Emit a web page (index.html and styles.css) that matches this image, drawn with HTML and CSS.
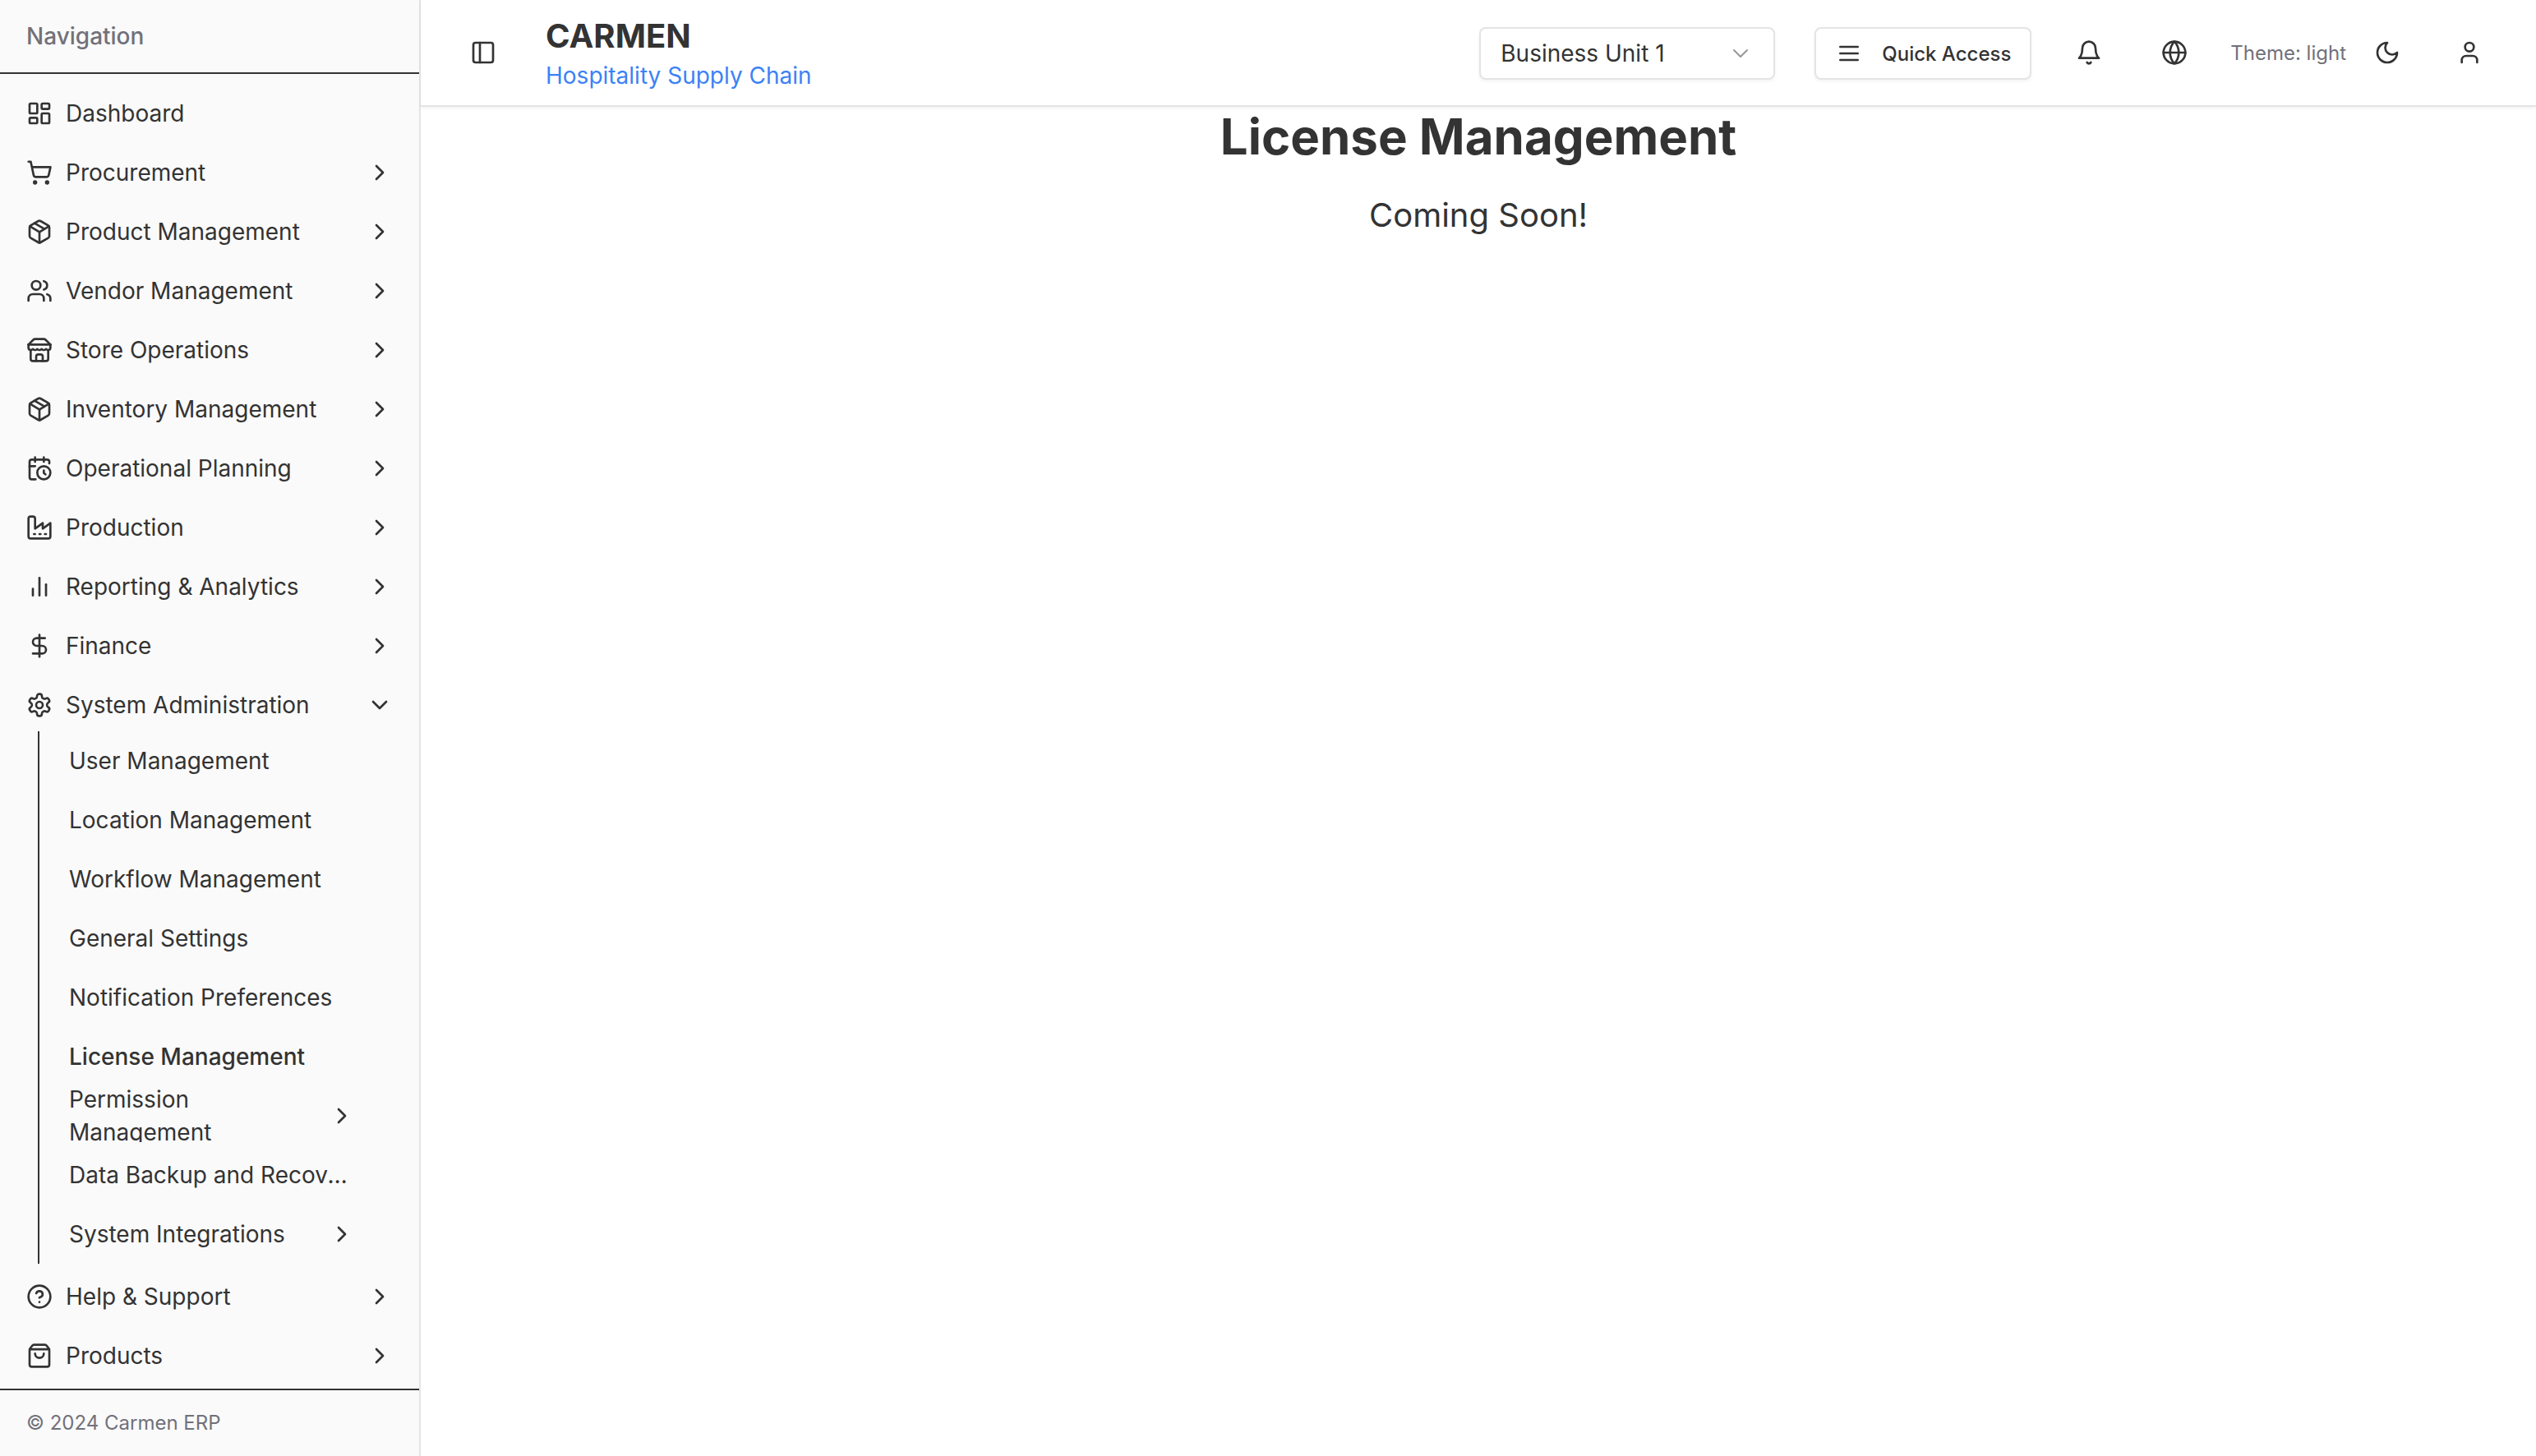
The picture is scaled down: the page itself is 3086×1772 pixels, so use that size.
FILE: index.html
```html
<!DOCTYPE html>
<html lang="en">
<head>
<meta charset="utf-8">
<title>CARMEN - License Management</title>
<link rel="stylesheet" href="styles.css">
</head>
<body>
<svg class="defs" aria-hidden="true">
  <defs>
    <symbol id="i-dashboard" viewBox="0 0 24 24"><rect x="3" y="3" width="7" height="9" rx="1"/><rect x="14" y="3" width="7" height="5" rx="1"/><rect x="14" y="12" width="7" height="9" rx="1"/><rect x="3" y="16" width="7" height="5" rx="1"/></symbol>
    <symbol id="i-cart" viewBox="0 0 24 24"><circle cx="8" cy="21" r="1"/><circle cx="19" cy="21" r="1"/><path d="M2.05 2.05h2l2.66 12.42a2 2 0 0 0 2 1.58h9.78a2 2 0 0 0 1.95-1.57l1.65-7.43H5.12"/></symbol>
    <symbol id="i-package" viewBox="0 0 24 24"><path d="M11 21.73a2 2 0 0 0 2 0l7-4A2 2 0 0 0 21 16V8a2 2 0 0 0-1-1.73l-7-4a2 2 0 0 0-2 0l-7 4A2 2 0 0 0 3 8v8a2 2 0 0 0 1 1.73z"/><path d="M12 22V12"/><path d="m3.3 7 7.703 4.734a2 2 0 0 0 1.994 0L20.7 7"/><path d="m7.5 4.27 9 5.15"/></symbol>
    <symbol id="i-users" viewBox="0 0 24 24"><path d="M16 21v-2a4 4 0 0 0-4-4H6a4 4 0 0 0-4 4v2"/><circle cx="9" cy="7" r="4"/><path d="M22 21v-2a4 4 0 0 0-3-3.87"/><path d="M16 3.13a4 4 0 0 1 0 7.75"/></symbol>
    <symbol id="i-store" viewBox="0 0 24 24"><path d="m2 7 4.41-4.41A2 2 0 0 1 7.83 2h8.34a2 2 0 0 1 1.42.59L22 7"/><path d="M4 12v8a2 2 0 0 0 2 2h12a2 2 0 0 0 2-2v-8"/><path d="M15 22v-4a2 2 0 0 0-2-2h-2a2 2 0 0 0-2 2v4"/><path d="M2 7h20"/><path d="M22 7v3a2 2 0 0 1-2 2a2.7 2.7 0 0 1-1.59-.63.7.7 0 0 0-.82 0A2.7 2.7 0 0 1 16 12a2.7 2.7 0 0 1-1.59-.63.7.7 0 0 0-.82 0A2.7 2.7 0 0 1 12 12a2.7 2.7 0 0 1-1.59-.63.7.7 0 0 0-.82 0A2.7 2.7 0 0 1 8 12a2.7 2.7 0 0 1-1.59-.63.7.7 0 0 0-.82 0A2.7 2.7 0 0 1 4 12a2 2 0 0 1-2-2V7"/></symbol>
    <symbol id="i-calendar" viewBox="0 0 24 24"><path d="M21 7.5V6a2 2 0 0 0-2-2H5a2 2 0 0 0-2 2v14a2 2 0 0 0 2 2h3.5"/><path d="M16 2v4"/><path d="M8 2v4"/><path d="M3 10h5"/><path d="M17.5 17.5 16 16.3V14"/><circle cx="16" cy="16" r="6"/></symbol>
    <symbol id="i-factory" viewBox="0 0 24 24"><path d="M2 20a2 2 0 0 0 2 2h16a2 2 0 0 0 2-2V8l-7 5V8l-7 5V4a2 2 0 0 0-2-2H4a2 2 0 0 0-2 2Z"/><path d="M17 18h1"/><path d="M12 18h1"/><path d="M7 18h1"/></symbol>
    <symbol id="i-chart" viewBox="0 0 24 24"><path d="M18 20V10"/><path d="M12 20V4"/><path d="M6 20v-6"/></symbol>
    <symbol id="i-dollar" viewBox="0 0 24 24"><path d="M12 2v20"/><path d="M17 5H9.5a3.5 3.5 0 0 0 0 7h5a3.5 3.5 0 0 1 0 7H6"/></symbol>
    <symbol id="i-gear" viewBox="0 0 24 24"><path d="M12.22 2h-.44a2 2 0 0 0-2 2v.18a2 2 0 0 1-1 1.73l-.43.25a2 2 0 0 1-2 0l-.15-.08a2 2 0 0 0-2.73.73l-.22.38a2 2 0 0 0 .73 2.73l.15.1a2 2 0 0 1 1 1.72v.51a2 2 0 0 1-1 1.74l-.15.09a2 2 0 0 0-.73 2.73l.22.38a2 2 0 0 0 2.73.73l.15-.08a2 2 0 0 1 2 0l.43.25a2 2 0 0 1 1 1.73V20a2 2 0 0 0 2 2h.44a2 2 0 0 0 2-2v-.18a2 2 0 0 1 1-1.73l.43-.25a2 2 0 0 1 2 0l.15.08a2 2 0 0 0 2.73-.73l.22-.39a2 2 0 0 0-.73-2.73l-.15-.08a2 2 0 0 1-1-1.74v-.5a2 2 0 0 1 1-1.74l.15-.09a2 2 0 0 0 .73-2.73l-.22-.38a2 2 0 0 0-2.73-.73l-.15.08a2 2 0 0 1-2 0l-.43-.25a2 2 0 0 1-1-1.73V4a2 2 0 0 0-2-2z"/><circle cx="12" cy="12" r="3"/></symbol>
    <symbol id="i-help" viewBox="0 0 24 24"><circle cx="12" cy="12" r="10"/><path d="M9.09 9a3 3 0 0 1 5.83 1c0 2-3 3-3 3"/><path d="M12 17h.01"/></symbol>
    <symbol id="i-bag" viewBox="0 0 24 24"><path d="M16 10a4 4 0 0 1-8 0"/><path d="M3.103 6.034h17.794"/><path d="M3.4 5.467a2 2 0 0 0-.4 1.2V20a2 2 0 0 0 2 2h14a2 2 0 0 0 2-2V6.667a2 2 0 0 0-.4-1.2l-2-2.667A2 2 0 0 0 17 2H7a2 2 0 0 0-1.6.8z"/></symbol>
    <symbol id="i-right" viewBox="0 0 24 24"><path d="m9 18 6-6-6-6"/></symbol>
    <symbol id="i-down" viewBox="0 0 24 24"><path d="m6 9 6 6 6-6"/></symbol>
    <symbol id="i-panel" viewBox="0 0 24 24"><rect x="3" y="3" width="18" height="18" rx="2"/><path d="M9 3v18"/></symbol>
    <symbol id="i-menu" viewBox="0 0 24 24"><path d="M4 12h16"/><path d="M4 18h16"/><path d="M4 6h16"/></symbol>
    <symbol id="i-bell" viewBox="0 0 24 24"><path d="M6 8a6 6 0 0 1 12 0c0 7 3 9 3 9H3s3-2 3-9"/><path d="M10.3 21a1.94 1.94 0 0 0 3.4 0"/></symbol>
    <symbol id="i-globe" viewBox="0 0 24 24"><circle cx="12" cy="12" r="10"/><path d="M12 2a14.5 14.5 0 0 0 0 20 14.5 14.5 0 0 0 0-20"/><path d="M2 12h20"/></symbol>
    <symbol id="i-moon" viewBox="0 0 24 24"><path d="M12 3a6 6 0 0 0 9 9 9 9 0 1 1-9-9Z"/></symbol>
    <symbol id="i-user" viewBox="0 0 24 24"><path d="M19 21v-2a4 4 0 0 0-4-4H9a4 4 0 0 0-4 4v2"/><circle cx="12" cy="7" r="4"/></symbol>
  </defs>
</svg>

<div class="app">
  <aside class="sidebar">
    <div class="side-head">Navigation</div>
    <nav class="side-nav">
      <a class="item"><svg class="ico"><use href="#i-dashboard"/></svg><span class="label">Dashboard</span></a>
      <a class="item"><svg class="ico"><use href="#i-cart"/></svg><span class="label">Procurement</span><svg class="ico chev"><use href="#i-right"/></svg></a>
      <a class="item"><svg class="ico"><use href="#i-package"/></svg><span class="label">Product Management</span><svg class="ico chev"><use href="#i-right"/></svg></a>
      <a class="item"><svg class="ico"><use href="#i-users"/></svg><span class="label">Vendor Management</span><svg class="ico chev"><use href="#i-right"/></svg></a>
      <a class="item"><svg class="ico"><use href="#i-store"/></svg><span class="label">Store Operations</span><svg class="ico chev"><use href="#i-right"/></svg></a>
      <a class="item"><svg class="ico"><use href="#i-package"/></svg><span class="label">Inventory Management</span><svg class="ico chev"><use href="#i-right"/></svg></a>
      <a class="item"><svg class="ico"><use href="#i-calendar"/></svg><span class="label">Operational Planning</span><svg class="ico chev"><use href="#i-right"/></svg></a>
      <a class="item"><svg class="ico"><use href="#i-factory"/></svg><span class="label">Production</span><svg class="ico chev"><use href="#i-right"/></svg></a>
      <a class="item"><svg class="ico"><use href="#i-chart"/></svg><span class="label">Reporting &amp; Analytics</span><svg class="ico chev"><use href="#i-right"/></svg></a>
      <a class="item"><svg class="ico"><use href="#i-dollar"/></svg><span class="label">Finance</span><svg class="ico chev"><use href="#i-right"/></svg></a>
      <div class="group">
        <a class="item"><svg class="ico"><use href="#i-gear"/></svg><span class="label">System Administration</span><svg class="ico chev"><use href="#i-down"/></svg></a>
        <div class="sub">
          <a class="sub-item"><span class="label">User Management</span></a>
          <a class="sub-item"><span class="label">Location Management</span></a>
          <a class="sub-item"><span class="label">Workflow Management</span></a>
          <a class="sub-item"><span class="label">General Settings</span></a>
          <a class="sub-item"><span class="label">Notification Preferences</span></a>
          <a class="sub-item active"><span class="label">License Management</span></a>
          <a class="sub-item"><span class="label wrap">Permission Management</span><svg class="ico chev"><use href="#i-right"/></svg></a>
          <a class="sub-item"><span class="label">Data Backup and Recovery</span></a>
          <a class="sub-item"><span class="label">System Integrations</span><svg class="ico chev"><use href="#i-right"/></svg></a>
        </div>
      </div>
      <a class="item"><svg class="ico"><use href="#i-help"/></svg><span class="label">Help &amp; Support</span><svg class="ico chev"><use href="#i-right"/></svg></a>
      <a class="item"><svg class="ico"><use href="#i-bag"/></svg><span class="label">Products</span><svg class="ico chev"><use href="#i-right"/></svg></a>
    </nav>
    <div class="side-foot">© 2024 Carmen ERP</div>
  </aside>

  <div class="page">
    <header class="topbar">
      <div class="brand-group">
        <button class="icon-btn toggle"><svg class="ico"><use href="#i-panel"/></svg></button>
        <div class="brand">
          <div class="brand-name">CARMEN</div>
          <div class="brand-sub">Hospitality Supply Chain</div>
        </div>
      </div>
      <div class="tools">
        <div class="select"><span>Business Unit 1</span><svg class="ico select-chev"><use href="#i-down"/></svg></div>
        <button class="quick"><svg class="ico"><use href="#i-menu"/></svg><span>Quick Access</span></button>
        <div class="tool-icons">
          <button class="icon-btn"><svg class="ico"><use href="#i-bell"/></svg></button>
          <button class="icon-btn"><svg class="ico"><use href="#i-globe"/></svg></button>
          <div class="theme">
            <span class="theme-text">Theme: light</span>
            <button class="icon-btn"><svg class="ico"><use href="#i-moon"/></svg></button>
          </div>
          <button class="icon-btn"><svg class="ico"><use href="#i-user"/></svg></button>
        </div>
      </div>
    </header>
    <main class="content">
      <h1 class="title">License Management</h1>
      <p class="soon">Coming Soon!</p>
    </main>
  </div>
</div>
</body>
</html>
```
FILE: styles.css
```css
* { box-sizing: border-box; }

html, body {
  margin: 0;
  height: 100%;
  background: #ffffff;
  color: #333333;
  font-family: Inter, "Liberation Sans", sans-serif;
}

.defs { display: none; }

.app {
  display: flex;
  height: 1772px;
  overflow: hidden;
}

.ico {
  width: 32px;
  height: 32px;
  flex: none;
  fill: none;
  stroke: currentColor;
  stroke-width: 2;
  stroke-linecap: round;
  stroke-linejoin: round;
}

/* Sidebar */
.sidebar {
  width: 512px;
  flex: none;
  display: flex;
  flex-direction: column;
  background: #fafafa;
  border-right: 2px solid #e4e4e7;
}

.side-head {
  height: 90px;
  flex: none;
  display: flex;
  align-items: center;
  padding: 0 32px;
  border-bottom: 2px solid #333333;
  font-size: 28px;
  font-weight: 500;
  color: #71717a;
}

.side-nav {
  flex: 1;
  min-height: 0;
  padding: 16px 16px 8px;
  display: flex;
  flex-direction: column;
  gap: 8px;
  overflow: hidden;
}

.item {
  height: 64px;
  flex: none;
  display: flex;
  align-items: center;
  gap: 16px;
  padding: 0 16px;
  font-size: 28px;
  line-height: 40px;
}

.label {
  flex: 1;
  min-width: 0;
  white-space: nowrap;
  overflow: hidden;
  text-overflow: ellipsis;
}

.label.wrap { white-space: normal; overflow: visible; }

.chev { margin-left: auto; }

.sub {
  margin: 0 46px 0 30px;
  padding: 4px 0 4px 20px;
  border-left: 2px solid #333333;
  display: flex;
  flex-direction: column;
  gap: 8px;
}

.sub-item {
  height: 64px;
  flex: none;
  display: flex;
  align-items: center;
  gap: 16px;
  padding: 0 16px;
  font-size: 28px;
  line-height: 40px;
  overflow: hidden;
}

.sub-item.active { font-weight: 500; }

.group {
  display: flex;
  flex-direction: column;
}

.side-foot {
  height: 82px;
  flex: none;
  display: flex;
  align-items: center;
  padding: 0 32px 2px;
  border-top: 2px solid #333333;
  font-size: 24px;
  color: #71717a;
}

/* Top bar */
.page {
  flex: 1;
  min-width: 0;
  display: flex;
  flex-direction: column;
}

.topbar {
  height: 130px;
  flex: none;
  display: flex;
  align-items: center;
  justify-content: space-between;
  padding: 2px 45px 0 24px;
  border-bottom: 2px solid #e4e4e7;
  box-shadow: 0 2px 4px rgba(0, 0, 0, 0.05);
  position: relative;
}

.brand-group {
  display: flex;
  align-items: center;
  gap: 24px;
}

.icon-btn {
  width: 72px;
  height: 72px;
  padding: 0;
  border: 0;
  background: transparent;
  color: #333333;
  display: flex;
  align-items: center;
  justify-content: center;
}

.toggle { width: 104px; margin-bottom: 2px; }

.brand { display: flex; flex-direction: column; padding-bottom: 3px; }

.brand-name {
  font-size: 40px;
  line-height: 56px;
  font-weight: 700;
}

.brand-sub {
  font-size: 28px;
  line-height: 40px;
  color: #3b82f6;
}

.tools {
  display: flex;
  align-items: center;
}

.select {
  width: 360px;
  height: 64px;
  display: flex;
  align-items: center;
  justify-content: space-between;
  padding: 0 24px;
  border: 2px solid #e4e4e7;
  border-radius: 8px;
  background: #ffffff;
  box-shadow: 0 2px 4px rgba(0, 0, 0, 0.05);
  font-size: 28px;
}

.select-chev { opacity: 0.5; stroke-width: 1.5; }

.quick {
  width: 264px;
  height: 64px;
  margin-left: 48px;
  padding: 0 24px;
  display: flex;
  align-items: center;
  gap: 24px;
  border: 2px solid #e4e4e7;
  border-radius: 8px;
  background: #ffffff;
  box-shadow: 0 2px 4px rgba(0, 0, 0, 0.05);
  color: #333333;
  font-family: inherit;
  font-size: 24px;
  font-weight: 500;
  white-space: nowrap;
}

.tool-icons {
  display: flex;
  align-items: center;
  gap: 32px;
  margin-left: 34px;
  margin-bottom: 2px;
}

.theme {
  display: flex;
  align-items: center;
  gap: 14px;
  margin-right: -4px;
}

.theme-text {
  font-size: 24px;
  color: #71717a;
  white-space: nowrap;
}

/* Content */
.content {
  flex: 1;
  text-align: center;
}

.title {
  margin: 0 0 32px;
  font-size: 60px;
  line-height: 72px;
  font-weight: 700;
}

.soon {
  margin: 0;
  font-size: 40px;
  line-height: 56px;
}
```
